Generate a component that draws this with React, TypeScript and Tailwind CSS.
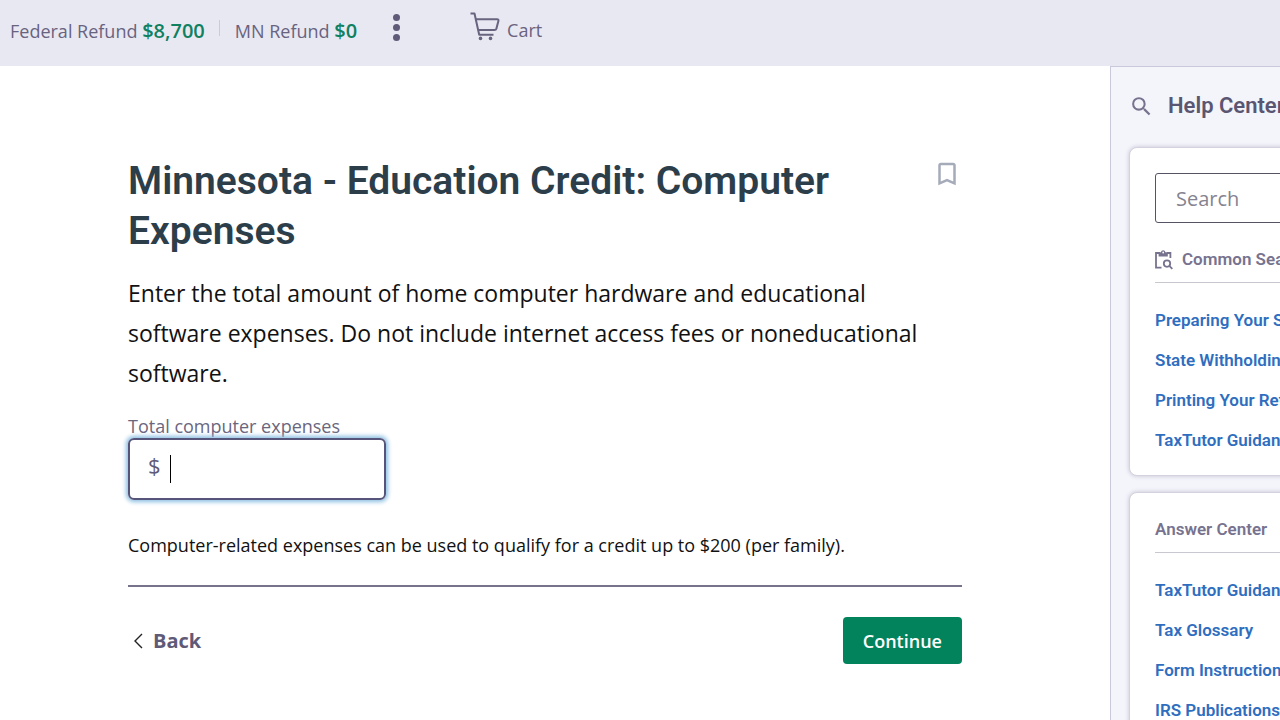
import { useState } from "react";
import { MdBookmarkBorder, MdSearch } from "react-icons/md";

const commonSearches = [
  "Preparing Your State Return",
  "State Withholding",
  "Printing Your Return",
  "TaxTutor Guidance",
];

const answerLinks = ["TaxTutor Guidance", "Tax Glossary", "Form Instructions", "IRS Publications"];

function CartIcon() {
  return (
    <svg width="30" height="30" viewBox="0 0 30 30" fill="none" stroke="#68637f" strokeWidth="2" aria-hidden="true">
      <path d="M0.5 1.5H4.5L9.2 22.8H23.5" strokeLinejoin="round" />
      <path d="M5.6 7.2H27C28.2 7.2 28.7 7.8 28.4 8.9L26.4 16.6C26.1 17.5 25.5 18 24.5 18H8" />
      <circle cx="10.5" cy="26.4" r="1.8" fill="#68637f" stroke="none" />
      <circle cx="20.5" cy="26.4" r="1.8" fill="#68637f" stroke="none" />
    </svg>
  );
}

function ClipboardSearchIcon() {
  return (
    <svg width="18" height="20" viewBox="0 0 18 20" fill="none" stroke="#77738f" strokeWidth="1.8" aria-hidden="true">
      <path d="M5 3H1V17.6H6.5" />
      <path d="M12 3H15.4V8" />
      <path d="M3.6 2.2H6C6.3 1 7.1 0.3 8.2 0.3S10.1 1 10.4 2.2H12.8V6.6H3.6ZM8.2 1.6A0.9 0.9 0 1 0 8.2 3.4A0.9 0.9 0 1 0 8.2 1.6Z" fill="#77738f" fillRule="evenodd" stroke="none" />
      <circle cx="12" cy="13.6" r="3.2" />
      <path d="M14.3 15.9L17.3 18.9" />
    </svg>
  );
}

function TopBar() {
  return (
    <header className="flex h-[66px] items-start bg-[#e8e8f2] text-lg text-[#68637f]">
      <p className="mt-4 ml-[10px] leading-[30px]">
        Federal Refund <span className="text-xl leading-[30px] font-semibold text-[#0f8060]">$8,700</span>
      </p>
      <span className="mt-5 ml-[14px] h-4 w-px bg-[#cbcbd8]" />
      <p className="mt-4 ml-[15px] leading-[30px]">
        MN Refund <span className="text-xl leading-[30px] font-semibold text-[#0f8060]">$0</span>
      </p>
      <button aria-label="More options" className="mt-[14px] ml-9 flex flex-col gap-[3px]">
        <span className="size-[7px] rounded-full bg-[#5f5a78]" />
        <span className="size-[7px] rounded-full bg-[#5f5a78]" />
        <span className="size-[7px] rounded-full bg-[#5f5a78]" />
      </button>
      <a href="#cart" className="mt-3 ml-[70px] flex gap-[7px]">
        <CartIcon />
        <span className="mt-1 leading-7">Cart</span>
      </a>
    </header>
  );
}

function LinkList({ links }: { links: string[] }) {
  return (
    <ul className="mt-[17px] text-[17px] leading-10 font-semibold text-[#2f6ebf]">
      {links.map((link) => (
        <li key={link}>
          <a href="#help">{link}</a>
        </li>
      ))}
    </ul>
  );
}

function HelpCenter() {
  const cardClass = "rounded-lg border border-[#d3d2de] bg-white px-[25px] shadow-[0_0_4px_rgba(60,55,90,0.25)]";

  return (
    <aside className="w-[170px] shrink-0 overflow-hidden border-t border-l border-[#cac9dc] bg-[#f4f4fb] font-[Roboto,sans-serif]">
      <div className="w-[360px] pt-6 pl-[18px]">
        <h2 className="flex items-center gap-[14px] text-[22px] leading-[30px] font-semibold text-[#5a5672]">
          <MdSearch size={25} className="text-[#77738f]" />
          Help Center
        </h2>

        <section className={`mt-[26px] pt-[25px] pb-[15px] ${cardClass}`}>
          <input
            type="search"
            aria-label="Search"
            placeholder="Search"
            className="block h-[50px] w-full rounded-[3px] border border-[#555464] px-5 font-['Open_Sans',sans-serif] text-xl placeholder:text-[#85838f]"
          />
          <h3 className="mt-[22px] flex h-[38px] items-center gap-[9px] border-b border-[#c9c8d0] pb-2 text-[17px] font-semibold text-[#77738f]">
            <ClipboardSearchIcon />
            Common Searches
          </h3>
          <LinkList links={commonSearches} />
        </section>

        <section className={`mt-4 pt-[22px] pb-[15px] ${cardClass}`}>
          <h3 className="flex h-[38px] items-center border-b border-[#c9c8d0] pb-2 text-[17px] font-semibold text-[#77738f]">
            Answer Center
          </h3>
          <LinkList links={answerLinks} />
        </section>
      </div>
    </aside>
  );
}

export default function App() {
  const [amount, setAmount] = useState("");

  return (
    <div className="flex h-screen flex-col overflow-hidden bg-white font-['Open_Sans',sans-serif]">
      <TopBar />
      <div className="flex min-h-0 flex-1">
        <main className="min-w-0 flex-1 pt-[90px] pr-[148px] pl-32">
          <div className="flex items-start justify-between">
            <h1 className="max-w-[740px] font-[Roboto,sans-serif] text-[39px] leading-[50px] font-semibold text-[#2d3e4b]">
              Minnesota - Education Credit: Computer Expenses
            </h1>
            <button aria-label="Bookmark this page" className="mt-[3px] text-[#a5abb9]">
              <MdBookmarkBorder size={30} />
            </button>
          </div>

          <p className="mt-[17px] max-w-[800px] text-[23px] leading-10 text-[#111]">
            Enter the total amount of home computer hardware and educational software expenses. Do not include internet
            access fees or noneducational software.
          </p>

          <label htmlFor="expenses" className="mt-[21px] block text-lg leading-6 text-[#6a667e]">
            Total computer expenses
          </label>
          <div className="relative flex h-[62px] w-[258px] items-center rounded-md border-2 border-[#56547a] pl-[18px] text-[22px] text-[#5f5a78] shadow-[0_0_4px_2px_#8cbfe2]">
            <span className="pb-2">$</span>
            <input
              id="expenses"
              value={amount}
              onChange={(e) => setAmount(e.target.value)}
              className="ml-2 h-full w-full min-w-0 bg-transparent caret-transparent outline-none"
            />
            {amount === "" && <span className="pointer-events-none absolute left-10 h-7 w-px bg-black" />}
          </div>

          <p className="mt-[31px] text-lg leading-7 text-[#111]">
            Computer-related expenses can be used to qualify for a credit up to $200 (per family).
          </p>

          <hr className="mt-[26px] border-t-2 border-[#77738a]" />

          <div className="mt-[30px] flex items-center justify-between">
            <button className="flex items-center gap-[9px] pl-1 text-xl font-bold text-[#5f5a78]">
              <svg width="12" height="18" viewBox="0 0 12 18" fill="none" stroke="#222" strokeWidth="1.4" aria-hidden="true">
                <path d="M10 2L3 9L10 16" />
              </svg>
              Back
            </button>
            <button className="h-[47px] rounded bg-[#03835c] px-5 text-lg font-semibold text-white">
              Continue
            </button>
          </div>
        </main>
        <HelpCenter />
      </div>
    </div>
  );
}
